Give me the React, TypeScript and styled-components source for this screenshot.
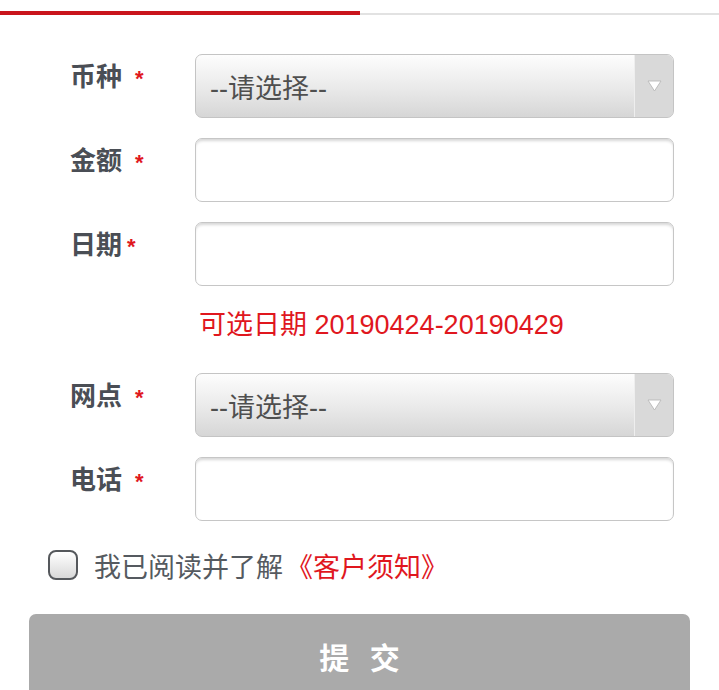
import * as React from 'react';
import styled, { createGlobalStyle } from 'styled-components';

const RED = '#e0171e';
const LABEL = '#4a4e55';

const GlobalStyle = createGlobalStyle`
  html, body {
    margin: 0;
    padding: 0;
    background: #fff;
    overflow: hidden;
  }
  body {
    font-family: "Liberation Sans", "Noto Sans CJK SC", sans-serif;
  }
`;

const Page = styled.div`
  width: 719px;
  height: 690px;
  padding-top: 11px;
  box-sizing: border-box;
  overflow: hidden;
`;

const TabTrack = styled.div`
  display: flex;
  align-items: flex-end;
  height: 4px;
`;

const ActiveTab = styled.div`
  flex: 0 0 360px;
  height: 4px;
  background: #c9151c;
`;

const RestTab = styled.div`
  flex: 1 1 auto;
  height: 2px;
  background: #e2e2e2;
`;

const Form = styled.form`
  margin: 39px 0 0;
  padding: 0 45px 0 0;
`;

const Row = styled.div`
  display: flex;
  align-items: flex-start;
  margin-bottom: 20px;
`;

const Label = styled.div`
  flex: 0 0 195px;
  min-width: 0;
  box-sizing: border-box;
  padding: 10px 0 0 70px;
  font-size: 26px;
  line-height: 26px;
  font-weight: bold;
  color: ${LABEL};
  white-space: nowrap;
`;

const Star = styled.span<{ $tight?: boolean }>`
  color: ${RED};
  margin-left: ${(p) => (p.$tight ? '5px' : '13px')};
  font-size: 22px;
`;

const TextBox = styled.input`
  flex: 1 1 auto;
  min-width: 0;
  height: 64px;
  box-sizing: border-box;
  margin: 0;
  padding: 0 14px;
  border: 1.5px solid #c6c6c6;
  border-radius: 7px;
  background: #fff;
  box-shadow: inset 0 3px 3px -1px rgba(0, 0, 0, 0.16);
  font: inherit;
  font-size: 24px;
  outline: none;
`;

const SelectBox = styled.div`
  flex: 1 1 auto;
  min-width: 0;
  height: 64px;
  box-sizing: border-box;
  display: flex;
  border: 1.5px solid #c4c4c4;
  border-radius: 7px;
  overflow: hidden;
  background: linear-gradient(#fdfdfd, #e9e9e9 55%, #d6d6d6);
`;

const SelectText = styled.div`
  flex: 1 1 auto;
  display: flex;
  align-items: center;
  padding-left: 14px;
  font-size: 27px;
  color: #4f4f4f;
`;

const ArrowCell = styled.div`
  flex: 0 0 38px;
  display: flex;
  align-items: center;
  justify-content: center;
  background: #d9d9d9;
  border-left: 1.5px solid #eeeeee;
`;

const Hint = styled.div`
  margin: 26px 0 34px;
  padding-left: 199px;
  font-size: 27px;
  line-height: 27px;
  color: ${RED};
`;

const AgreeRow = styled.label`
  display: flex;
  align-items: center;
  gap: 16px;
  margin: 29px 0 0 48px;
  height: 30px;
  font-size: 27px;
  color: #555a60;
`;

const CheckBox = styled.span`
  flex: 0 0 auto;
  width: 30px;
  height: 30px;
  box-sizing: border-box;
  border: 2px solid #55585c;
  border-radius: 8px;
  background: linear-gradient(#ffffff, #d8d8d8);
`;

const Notice = styled.span`
  color: ${RED};
  margin-left: 3px;
`;

const SubmitButton = styled.button`
  display: block;
  width: 661px;
  height: 88px;
  margin: 34px 0 0 29px;
  border: none;
  border-radius: 7px;
  background: #aaaaaa;
  color: #fff;
  font: inherit;
  font-size: 30px;
  font-weight: bold;
  letter-spacing: 6px;
  padding: 0 0 4px 6px;
`;

const Arrow = () => (
  <svg width="15" height="12" viewBox="0 0 15 12">
    <path d="M1 1 L14 1 L7.5 11 Z" fill="#fff" stroke="#b8b8b8" strokeWidth="0.9" />
  </svg>
);

const Select: React.FC<{ placeholder: string }> = ({ placeholder }) => (
  <SelectBox>
    <SelectText>{placeholder}</SelectText>
    <ArrowCell>
      <Arrow />
    </ArrowCell>
  </SelectBox>
);

export default function App() {
  return (
    <Page>
      <GlobalStyle />
      <TabTrack>
        <ActiveTab />
        <RestTab />
      </TabTrack>
      <Form onSubmit={(e) => e.preventDefault()}>
        <Row>
          <Label>
            币种<Star>*</Star>
          </Label>
          <Select placeholder="--请选择--" />
        </Row>
        <Row>
          <Label>
            金额<Star>*</Star>
          </Label>
          <TextBox type="text" />
        </Row>
        <Row>
          <Label>
            日期<Star $tight>*</Star>
          </Label>
          <TextBox type="text" />
        </Row>
        <Hint>可选日期 20190424-20190429</Hint>
        <Row>
          <Label>
            网点<Star>*</Star>
          </Label>
          <Select placeholder="--请选择--" />
        </Row>
        <Row>
          <Label>
            电话<Star>*</Star>
          </Label>
          <TextBox type="text" />
        </Row>
      </Form>
      <AgreeRow>
        <CheckBox />
        <span>
          我已阅读并了解<Notice>《客户须知》</Notice>
        </span>
      </AgreeRow>
      <SubmitButton type="button">提 交</SubmitButton>
    </Page>
  );
}
